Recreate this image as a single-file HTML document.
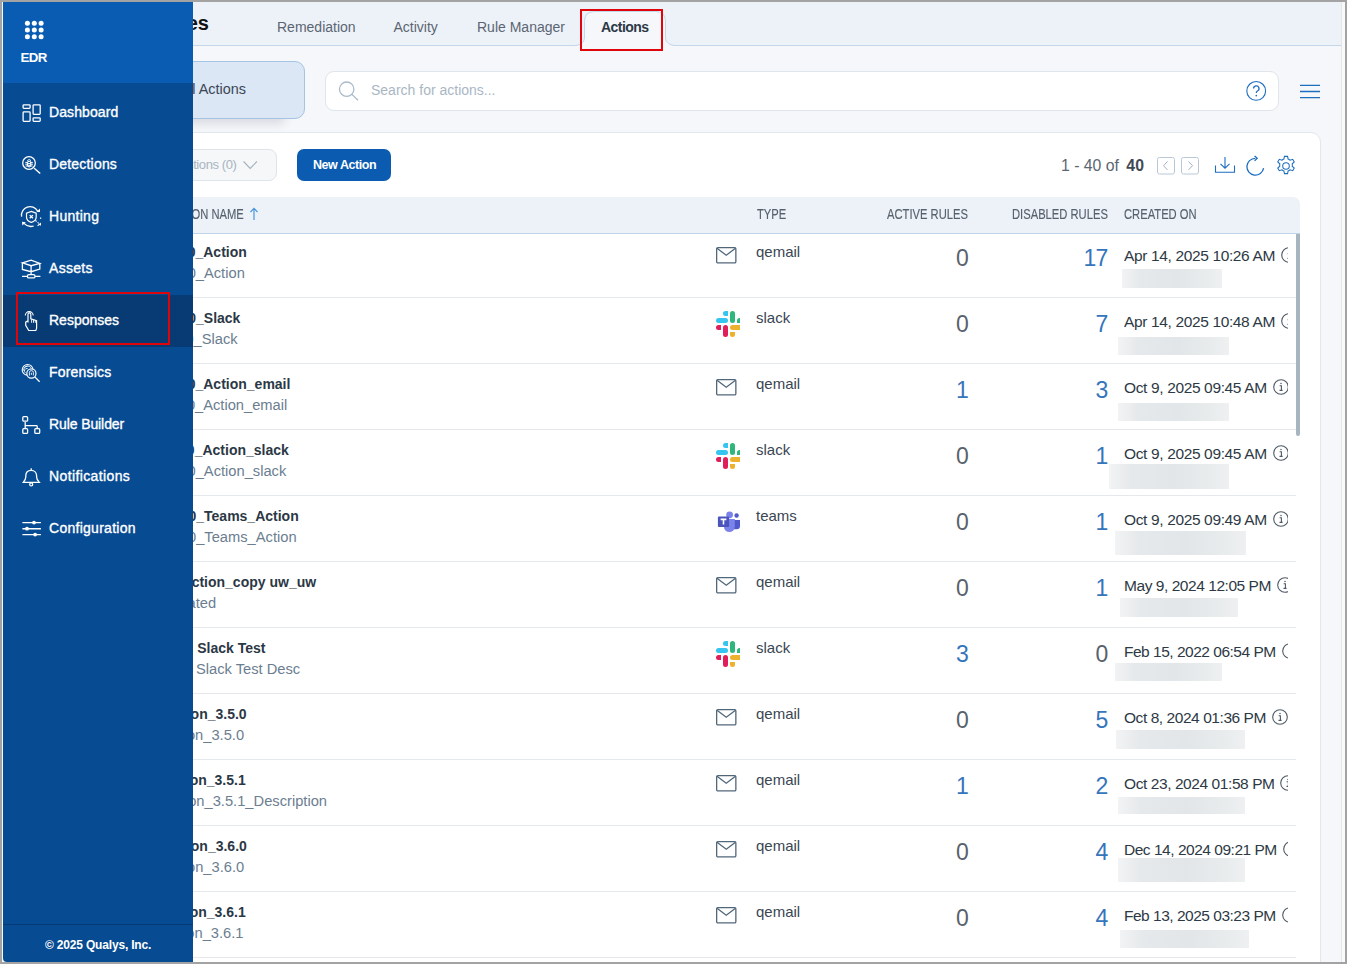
<!DOCTYPE html>
<html><head><meta charset="utf-8">
<style>
*{box-sizing:border-box}
html,body{margin:0;padding:0}
body{width:1347px;height:964px;overflow:hidden;background:#a3a3a3;position:relative;font-family:"Liberation Sans",sans-serif}
.abs{position:absolute}
#frame{position:absolute;left:2px;top:2px;width:1343px;height:960px;background:#f9f9f9;overflow:hidden}
#page{position:absolute;left:1px;top:0;width:1338px;height:960px;background:#f5f7fa;overflow:hidden}
#vline{position:absolute;left:1339px;top:0;width:1px;height:960px;background:#e6e6e6}
#content{position:absolute;left:-3px;top:-2px;width:1347px;height:964px}
.tab{position:absolute;top:20px;font-size:14px;color:#5b6572;line-height:14px;white-space:nowrap}
.nm{position:absolute;font-size:14px;font-weight:700;color:#2b3845;white-space:nowrap;line-height:18px}
.ds{position:absolute;font-size:14.7px;color:#6b7e90;white-space:nowrap;line-height:18px}
.ic{position:absolute;line-height:0}
.ty{position:absolute;left:756px;font-size:15px;color:#3a4653;line-height:18px}
.num{position:absolute;font-size:23px;color:#58626c;line-height:26px;letter-spacing:-0.8px}
.num.lk{color:#3575bb}
.dt{position:absolute;left:1124px;width:164px;overflow:hidden;white-space:nowrap;font-size:15.5px;color:#2d3944;line-height:18px;letter-spacing:-0.36px}
.dt svg{vertical-align:-2px;margin-left:2px}
.rb{position:absolute;left:150px;width:1146px;height:1px;background:#e5e9ed}
.blur{position:absolute;background:linear-gradient(90deg,#f2f3f4 0%,#e6e9eb 18%,#e3e6e8 55%,#e9eced 85%,#eef0f1 100%);filter:blur(0.3px)}
.th{position:absolute;top:207px;font-size:14px;color:#56616d;line-height:15px;white-space:nowrap;transform:scaleX(0.80);transform-origin:left top;-webkit-text-stroke:0.15px #56616d}
#sidebar{position:absolute;left:3px;top:2px;width:190px;height:960px;background:#074b92;overflow:hidden;border-bottom-left-radius:4px}
#sbtop{position:absolute;left:0;top:0;width:190px;height:81px;background:#0a5cb3}
.navic{position:absolute;left:15px}
.navt{position:absolute;left:46px;font-size:14px;font-weight:400;-webkit-text-stroke:0.35px #fff;color:#fff;letter-spacing:-0.05px;line-height:18px;white-space:nowrap}
</style></head><body>
<div id="frame"><div id="page"><div id="content">

<!-- header band -->
<div class="abs" style="left:193px;top:2px;width:1148px;height:44px;background:#edf2f9;border-bottom:1px solid #c3d6ea"></div>
<div class="abs" style="right:1138px;top:12px;font-size:20px;font-weight:700;color:#111;line-height:22px;white-space:nowrap">Responses</div>
<div class="tab" style="left:277px">Remediation</div>
<div class="tab" style="left:393.5px">Activity</div>
<div class="tab" style="left:477px">Rule Manager</div>
<svg class="abs" style="left:574px;top:10px" width="102" height="37" viewBox="0 0 102 37"><path d="M0 35.5 C6 35.5 10.5 33 10.5 27 V11.5 Q10.5 1.5 20.5 1.5 H81.5 Q91.5 1.5 91.5 11.5 V27 C91.5 33 96 35.5 102 35.5 V37 H0 Z" fill="#f5f7fa"/><path d="M0 35.5 C6 35.5 10.5 33 10.5 27 V11.5 Q10.5 1.5 20.5 1.5 H81.5 Q91.5 1.5 91.5 11.5 V27 C91.5 33 96 35.5 102 35.5" fill="none" stroke="#c3d6ea" stroke-width="1"/></svg>
<div class="abs" style="left:601px;top:20px;font-size:14px;font-weight:700;color:#2c3946;line-height:14px;letter-spacing:-0.55px">Actions</div>
<div class="abs" style="left:580px;top:9px;width:83px;height:42px;border:2px solid #e0040b"></div>

<!-- all actions pill -->
<div class="abs" style="left:150px;top:61px;width:155px;height:58px;background:#dbe7f4;border:1px solid #a5c3e3;border-radius:10px;box-shadow:-16px 8px 10px -3px rgba(30,40,60,.13)"></div>
<div class="abs" style="left:179.5px;top:81px;font-size:14.4px;color:#3a4654;line-height:16px">All Actions</div>

<!-- search -->
<div class="abs" style="left:325px;top:71px;width:954px;height:40px;background:#fff;border:1px solid #dfe5eb;border-radius:9px"></div>
<svg class="abs" style="left:338px;top:81px" width="22" height="22" viewBox="0 0 22 22" fill="none" stroke="#a9bac9" stroke-width="1.3"><circle cx="8.7" cy="8.2" r="7.2"/><path d="M13.9 13.4 L20 19.3"/></svg>
<div class="abs" style="left:371px;top:83px;font-size:14px;color:#a9b7c4;line-height:14px;white-space:nowrap">Search for actions...</div>
<svg class="abs" style="left:1245px;top:80px" width="22" height="22" viewBox="0 0 22 22"><circle cx="11.2" cy="10.9" r="9.4" fill="none" stroke="#1e6ec0" stroke-width="1.1"/><path d="M8.6 8.6 a2.7 2.7 0 1 1 3.8 2.4 c-.8 .35 -1.1 .9 -1.1 1.9" fill="none" stroke="#1e6ec0" stroke-width="1.3"/><circle cx="11.3" cy="15.6" r="0.85" fill="#1e6ec0"/></svg>
<svg class="abs" style="left:1299px;top:83px" width="22" height="16" viewBox="0 0 22 16" fill="none" stroke="#1e6ec0" stroke-width="1.3"><path d="M1 2.3 H21 M1 8.5 H21 M1 14.7 H21"/></svg>

<!-- card -->
<div class="abs" style="left:150px;top:132px;width:1171px;height:900px;background:#fff;border:1px solid #e2e7ed;border-radius:10px"></div>
<div class="abs" style="left:150px;top:149px;width:127px;height:32px;background:#f5f7f9;border:1px solid #dee4ea;border-radius:8px"></div>
<div class="abs" style="right:1110.5px;top:158px;font-size:13px;color:#a9b5c0;line-height:14px;letter-spacing:-0.4px;white-space:nowrap">Quick Actions (0)</div>
<svg class="abs" style="left:243px;top:161px" width="15" height="9" viewBox="0 0 15 9" fill="none" stroke="#a3b1bd" stroke-width="1.1"><path d="M0.6 0.5 L7.2 7.5 L13.9 0.5"/></svg>
<div class="abs" style="left:297px;top:149px;width:94px;height:32px;background:#0b5cb0;border-radius:7px"></div>
<div class="abs" style="left:313px;top:158px;font-size:12.5px;font-weight:700;color:#fff;line-height:14px;letter-spacing:-0.45px;white-space:nowrap">New Action</div>

<!-- pagination -->
<div class="abs" style="left:1061px;top:157px;font-size:15.8px;color:#5b6672;line-height:17px;white-space:nowrap">1 - 40 of <b style="color:#3f4a56;margin-left:3px">40</b></div>
<svg class="abs" style="left:1157px;top:157px" width="18" height="18" viewBox="0 0 18 18"><rect x="0.5" y="0.5" width="17" height="16.5" rx="2" fill="none" stroke="#b9c8d6"/><path d="M10.5 4.5 L6.5 8.7 L10.5 12.9" fill="none" stroke="#9fb2c4" stroke-width="1"/></svg>
<svg class="abs" style="left:1181px;top:157px" width="18" height="18" viewBox="0 0 18 18"><rect x="0.5" y="0.5" width="17" height="16.5" rx="2" fill="none" stroke="#b9c8d6"/><path d="M7.5 4.5 L11.5 8.7 L7.5 12.9" fill="none" stroke="#9fb2c4" stroke-width="1"/></svg>
<svg class="abs" style="left:1214px;top:156px" width="22" height="18" viewBox="0 0 22 18" fill="none" stroke="#1e6ec0" stroke-width="1.1"><path d="M11 1 V12 M6.5 7.8 L11 12.2 L15.5 7.8 M1.5 9.5 V16.3 H20.5 V9.5"/></svg>
<svg class="abs" style="left:1245px;top:155px" width="21" height="21" viewBox="0 0 21 21" fill="none" stroke="#1e6ec0" stroke-width="1.3"><path d="M10.3 3.3 A8.4 8.4 0 1 0 18.6 13.2"/><path d="M9.6 0.9 L12.2 3.3 L9.6 5.9"/></svg>
<svg class="abs" style="left:1275px;top:155px" width="22" height="22" viewBox="0 0 24 24" fill="none" stroke="#1e6ec0" stroke-width="1.15"><path d="M10.3 1.5 h3.4 l.6 2.9 a8 8 0 0 1 2.2 1.3 l2.8 -1 1.7 2.9 -2.2 2 a8 8 0 0 1 0 2.6 l2.2 2 -1.7 2.9 -2.8 -1 a8 8 0 0 1 -2.2 1.3 l-.6 2.9 h-3.4 l-.6 -2.9 a8 8 0 0 1 -2.2 -1.3 l-2.8 1 -1.7 -2.9 2.2 -2 a8 8 0 0 1 0 -2.6 l-2.2 -2 1.7 -2.9 2.8 1 a8 8 0 0 1 2.2 -1.3 Z"/><circle cx="12" cy="12" r="3.6"/></svg>

<!-- table header -->
<div class="abs" style="left:150px;top:197px;width:1150px;height:37px;background:#edf2f9;border-bottom:1px solid #bfd4ea;border-top-right-radius:7px"></div>
<div class="th" style="left:166px">ACTION NAME</div>
<svg class="abs" style="left:249px;top:207px" width="10" height="14" viewBox="0 0 10 14" fill="none" stroke="#4a97dc" stroke-width="1.2"><path d="M5 13 V1.5 M1.5 5 L5 1.3 L8.5 5"/></svg>
<div class="th" style="left:756.5px">TYPE</div>
<div class="th" style="left:886.5px">ACTIVE RULES</div>
<div class="th" style="left:1012px">DISABLED RULES</div>
<div class="th" style="left:1124px">CREATED ON</div>

<!-- rows -->

<div class="rb" style="top:297px"></div>
<div class="nm" style="right:1100.2px;top:243px">0_Action</div>
<div class="ds" style="right:1102.2px;top:264px">0_Action</div>
<div class="ic" style="left:716px;top:247px"><svg width="22" height="18" viewBox="0 0 22 18"><rect x="0.65" y="0.65" width="19.2" height="15.2" rx="1.2" fill="none" stroke="#51677a" stroke-width="1.3"/><path d="M1 1.2 L10.25 8.2 L19.5 1.2" fill="none" stroke="#51677a" stroke-width="1.3"/></svg></div>
<div class="ty" style="top:243px">qemail</div>
<div class="num" style="right:379px;top:245px">0</div>
<div class="num lk" style="right:239.5px;top:245px">17</div>
<div class="dt" style="top:247px;letter-spacing:-0.36px"><span>Apr 14, 2025 10:26 AM</span> <svg width="16" height="16" viewBox="0 0 16 16"><circle cx="8" cy="8" r="7.3" fill="none" stroke="#4d5966" stroke-width="1.1"/><circle cx="8" cy="4.6" r="0.75" fill="#4d5966"/><path d="M6.6 6.7 H8.4 V11.3 M6.5 11.4 H9.6" fill="none" stroke="#4d5966" stroke-width="1.1"/></svg></div>
<div class="blur" style="left:1122px;top:269px;width:100.0px;height:18.5px"></div>

<div class="rb" style="top:363px"></div>
<div class="nm" style="right:1106.6px;top:309px">0_Slack</div>
<div class="ds" style="right:1109.3px;top:330px">0_Slack</div>
<div class="ic" style="left:716px;top:311px"><svg width="24" height="26" viewBox="0 0 24 26">
<rect x="7" y="0" width="5" height="5" rx="2.5" fill="#36c5f0"/><rect x="9.5" y="0" width="2.5" height="5" fill="#36c5f0"/>
<rect x="0" y="7" width="12" height="5" rx="2.5" fill="#36c5f0"/>
<rect x="14" y="0" width="5" height="12" rx="2.5" fill="#2eb67d"/>
<rect x="21" y="7" width="5" height="5" rx="2.5" fill="#2eb67d"/><rect x="21" y="9.5" width="5" height="2.5" fill="#2eb67d"/>
<rect x="0" y="14" width="5" height="5" rx="2.5" fill="#e01e5a"/><rect x="2.5" y="14" width="2.5" height="5" fill="#e01e5a"/>
<rect x="7" y="14" width="5" height="12" rx="2.5" fill="#e01e5a"/>
<rect x="14" y="14" width="12" height="5" rx="2.5" fill="#ecb22e"/>
<rect x="14" y="21" width="5" height="5" rx="2.5" fill="#ecb22e"/><rect x="14" y="21" width="5" height="2.5" fill="#ecb22e"/>
</svg></div>
<div class="ty" style="top:309px">slack</div>
<div class="num" style="right:379px;top:311px">0</div>
<div class="num lk" style="right:239.5px;top:311px">7</div>
<div class="dt" style="top:313px;letter-spacing:-0.36px"><span>Apr 14, 2025 10:48 AM</span> <svg width="16" height="16" viewBox="0 0 16 16"><circle cx="8" cy="8" r="7.3" fill="none" stroke="#4d5966" stroke-width="1.1"/><circle cx="8" cy="4.6" r="0.75" fill="#4d5966"/><path d="M6.6 6.7 H8.4 V11.3 M6.5 11.4 H9.6" fill="none" stroke="#4d5966" stroke-width="1.1"/></svg></div>
<div class="blur" style="left:1118px;top:337px;width:111.0px;height:17.7px"></div>

<div class="rb" style="top:429px"></div>
<div class="nm" style="right:1056.6px;top:375px">0_Action_email</div>
<div class="ds" style="right:1059.7px;top:396px">0_Action_email</div>
<div class="ic" style="left:716px;top:379px"><svg width="22" height="18" viewBox="0 0 22 18"><rect x="0.65" y="0.65" width="19.2" height="15.2" rx="1.2" fill="none" stroke="#51677a" stroke-width="1.3"/><path d="M1 1.2 L10.25 8.2 L19.5 1.2" fill="none" stroke="#51677a" stroke-width="1.3"/></svg></div>
<div class="ty" style="top:375px">qemail</div>
<div class="num lk" style="right:379px;top:377px">1</div>
<div class="num lk" style="right:239.5px;top:377px">3</div>
<div class="dt" style="top:379px;letter-spacing:-0.36px"><span>Oct 9, 2025 09:45 AM</span> <svg width="16" height="16" viewBox="0 0 16 16"><circle cx="8" cy="8" r="7.3" fill="none" stroke="#4d5966" stroke-width="1.1"/><circle cx="8" cy="4.6" r="0.75" fill="#4d5966"/><path d="M6.6 6.7 H8.4 V11.3 M6.5 11.4 H9.6" fill="none" stroke="#4d5966" stroke-width="1.1"/></svg></div>
<div class="blur" style="left:1118px;top:402.5px;width:111.0px;height:18.3px"></div>

<div class="rb" style="top:495px"></div>
<div class="nm" style="right:1058.2px;top:441px">0_Action_slack</div>
<div class="ds" style="right:1060.7px;top:462px">0_Action_slack</div>
<div class="ic" style="left:716px;top:443px"><svg width="24" height="26" viewBox="0 0 24 26">
<rect x="7" y="0" width="5" height="5" rx="2.5" fill="#36c5f0"/><rect x="9.5" y="0" width="2.5" height="5" fill="#36c5f0"/>
<rect x="0" y="7" width="12" height="5" rx="2.5" fill="#36c5f0"/>
<rect x="14" y="0" width="5" height="12" rx="2.5" fill="#2eb67d"/>
<rect x="21" y="7" width="5" height="5" rx="2.5" fill="#2eb67d"/><rect x="21" y="9.5" width="5" height="2.5" fill="#2eb67d"/>
<rect x="0" y="14" width="5" height="5" rx="2.5" fill="#e01e5a"/><rect x="2.5" y="14" width="2.5" height="5" fill="#e01e5a"/>
<rect x="7" y="14" width="5" height="12" rx="2.5" fill="#e01e5a"/>
<rect x="14" y="14" width="12" height="5" rx="2.5" fill="#ecb22e"/>
<rect x="14" y="21" width="5" height="5" rx="2.5" fill="#ecb22e"/><rect x="14" y="21" width="5" height="2.5" fill="#ecb22e"/>
</svg></div>
<div class="ty" style="top:441px">slack</div>
<div class="num" style="right:379px;top:443px">0</div>
<div class="num lk" style="right:239.5px;top:443px">1</div>
<div class="dt" style="top:445px;letter-spacing:-0.36px"><span>Oct 9, 2025 09:45 AM</span> <svg width="16" height="16" viewBox="0 0 16 16"><circle cx="8" cy="8" r="7.3" fill="none" stroke="#4d5966" stroke-width="1.1"/><circle cx="8" cy="4.6" r="0.75" fill="#4d5966"/><path d="M6.6 6.7 H8.4 V11.3 M6.5 11.4 H9.6" fill="none" stroke="#4d5966" stroke-width="1.1"/></svg></div>
<div class="blur" style="left:1109px;top:464px;width:120.0px;height:25.0px"></div>

<div class="rb" style="top:561px"></div>
<div class="nm" style="right:1048.3px;top:507px">0_Teams_Action</div>
<div class="ds" style="right:1050.4px;top:528px">0_Teams_Action</div>
<div class="ic" style="left:717px;top:510px"><svg width="23" height="23" viewBox="0 0 23 23">
<circle cx="19.6" cy="5.5" r="2.2" fill="#5059c9"/>
<path d="M16.5 10 H23 V16 a3.3 3.3 0 0 1 -3.3 3.3 H16.5 Z" fill="#5059c9"/>
<circle cx="12.6" cy="4.8" r="3.4" fill="#7b83eb"/>
<path d="M6.9 9 H17.8 V16.6 a5.45 5.45 0 0 1 -10.9 0 Z" fill="#7b83eb"/>
<rect x="0.9" y="6.5" width="11.2" height="10.4" rx="1" fill="#4b53bc"/>
<path d="M3.6 9.4 H9.4 M6.5 9.4 V14.6" stroke="#fff" stroke-width="1.6" fill="none"/>
</svg></div>
<div class="ty" style="top:507px">teams</div>
<div class="num" style="right:379px;top:509px">0</div>
<div class="num lk" style="right:239.5px;top:509px">1</div>
<div class="dt" style="top:511px;letter-spacing:-0.36px"><span>Oct 9, 2025 09:49 AM</span> <svg width="16" height="16" viewBox="0 0 16 16"><circle cx="8" cy="8" r="7.3" fill="none" stroke="#4d5966" stroke-width="1.1"/><circle cx="8" cy="4.6" r="0.75" fill="#4d5966"/><path d="M6.6 6.7 H8.4 V11.3 M6.5 11.4 H9.6" fill="none" stroke="#4d5966" stroke-width="1.1"/></svg></div>
<div class="blur" style="left:1115px;top:531px;width:130.5px;height:24.0px"></div>

<div class="rb" style="top:627px"></div>
<div class="nm" style="right:1030.9px;top:573px">Action_copy uw_uw</div>
<div class="ds" style="right:1130.9px;top:594px">Updated</div>
<div class="ic" style="left:716px;top:577px"><svg width="22" height="18" viewBox="0 0 22 18"><rect x="0.65" y="0.65" width="19.2" height="15.2" rx="1.2" fill="none" stroke="#51677a" stroke-width="1.3"/><path d="M1 1.2 L10.25 8.2 L19.5 1.2" fill="none" stroke="#51677a" stroke-width="1.3"/></svg></div>
<div class="ty" style="top:573px">qemail</div>
<div class="num" style="right:379px;top:575px">0</div>
<div class="num lk" style="right:239.5px;top:575px">1</div>
<div class="dt" style="top:577px;letter-spacing:-0.45px"><span>May 9, 2024 12:05 PM</span> <svg width="16" height="16" viewBox="0 0 16 16"><circle cx="8" cy="8" r="7.3" fill="none" stroke="#4d5966" stroke-width="1.1"/><circle cx="8" cy="4.6" r="0.75" fill="#4d5966"/><path d="M6.6 6.7 H8.4 V11.3 M6.5 11.4 H9.6" fill="none" stroke="#4d5966" stroke-width="1.1"/></svg></div>
<div class="blur" style="left:1120px;top:598px;width:118.0px;height:19.0px"></div>

<div class="rb" style="top:693px"></div>
<div class="nm" style="right:1081.5px;top:639px">Slack Test</div>
<div class="ds" style="right:1046.8px;top:660px">Slack Test Desc</div>
<div class="ic" style="left:716px;top:641px"><svg width="24" height="26" viewBox="0 0 24 26">
<rect x="7" y="0" width="5" height="5" rx="2.5" fill="#36c5f0"/><rect x="9.5" y="0" width="2.5" height="5" fill="#36c5f0"/>
<rect x="0" y="7" width="12" height="5" rx="2.5" fill="#36c5f0"/>
<rect x="14" y="0" width="5" height="12" rx="2.5" fill="#2eb67d"/>
<rect x="21" y="7" width="5" height="5" rx="2.5" fill="#2eb67d"/><rect x="21" y="9.5" width="5" height="2.5" fill="#2eb67d"/>
<rect x="0" y="14" width="5" height="5" rx="2.5" fill="#e01e5a"/><rect x="2.5" y="14" width="2.5" height="5" fill="#e01e5a"/>
<rect x="7" y="14" width="5" height="12" rx="2.5" fill="#e01e5a"/>
<rect x="14" y="14" width="12" height="5" rx="2.5" fill="#ecb22e"/>
<rect x="14" y="21" width="5" height="5" rx="2.5" fill="#ecb22e"/><rect x="14" y="21" width="5" height="2.5" fill="#ecb22e"/>
</svg></div>
<div class="ty" style="top:639px">slack</div>
<div class="num lk" style="right:379px;top:641px">3</div>
<div class="num" style="right:239.5px;top:641px">0</div>
<div class="dt" style="top:643px;letter-spacing:-0.49px"><span>Feb 15, 2022 06:54 PM</span> <svg width="16" height="16" viewBox="0 0 16 16"><circle cx="8" cy="8" r="7.3" fill="none" stroke="#4d5966" stroke-width="1.1"/><circle cx="8" cy="4.6" r="0.75" fill="#4d5966"/><path d="M6.6 6.7 H8.4 V11.3 M6.5 11.4 H9.6" fill="none" stroke="#4d5966" stroke-width="1.1"/></svg></div>
<div class="blur" style="left:1114.8px;top:662.8px;width:107.2px;height:18.6px"></div>

<div class="rb" style="top:759px"></div>
<div class="nm" style="right:1100.4px;top:705px">Action_3.5.0</div>
<div class="ds" style="right:1102.9px;top:726px">Action_3.5.0</div>
<div class="ic" style="left:716px;top:709px"><svg width="22" height="18" viewBox="0 0 22 18"><rect x="0.65" y="0.65" width="19.2" height="15.2" rx="1.2" fill="none" stroke="#51677a" stroke-width="1.3"/><path d="M1 1.2 L10.25 8.2 L19.5 1.2" fill="none" stroke="#51677a" stroke-width="1.3"/></svg></div>
<div class="ty" style="top:705px">qemail</div>
<div class="num" style="right:379px;top:707px">0</div>
<div class="num lk" style="right:239.5px;top:707px">5</div>
<div class="dt" style="top:709px;letter-spacing:-0.44px"><span>Oct 8, 2024 01:36 PM</span> <svg width="16" height="16" viewBox="0 0 16 16"><circle cx="8" cy="8" r="7.3" fill="none" stroke="#4d5966" stroke-width="1.1"/><circle cx="8" cy="4.6" r="0.75" fill="#4d5966"/><path d="M6.6 6.7 H8.4 V11.3 M6.5 11.4 H9.6" fill="none" stroke="#4d5966" stroke-width="1.1"/></svg></div>
<div class="blur" style="left:1116px;top:730px;width:128.7px;height:18.5px"></div>

<div class="rb" style="top:825px"></div>
<div class="nm" style="right:1101.3px;top:771px">Action_3.5.1</div>
<div class="ds" style="right:1020.0px;top:792px">Action_3.5.1_Description</div>
<div class="ic" style="left:716px;top:775px"><svg width="22" height="18" viewBox="0 0 22 18"><rect x="0.65" y="0.65" width="19.2" height="15.2" rx="1.2" fill="none" stroke="#51677a" stroke-width="1.3"/><path d="M1 1.2 L10.25 8.2 L19.5 1.2" fill="none" stroke="#51677a" stroke-width="1.3"/></svg></div>
<div class="ty" style="top:771px">qemail</div>
<div class="num lk" style="right:379px;top:773px">1</div>
<div class="num lk" style="right:239.5px;top:773px">2</div>
<div class="dt" style="top:775px;letter-spacing:-0.42px"><span>Oct 23, 2024 01:58 PM</span> <svg width="16" height="16" viewBox="0 0 16 16"><circle cx="8" cy="8" r="7.3" fill="none" stroke="#4d5966" stroke-width="1.1"/><circle cx="8" cy="4.6" r="0.75" fill="#4d5966"/><path d="M6.6 6.7 H8.4 V11.3 M6.5 11.4 H9.6" fill="none" stroke="#4d5966" stroke-width="1.1"/></svg></div>
<div class="blur" style="left:1117.7px;top:796.7px;width:127.0px;height:17.8px"></div>

<div class="rb" style="top:891px"></div>
<div class="nm" style="right:1100.2px;top:837px">Action_3.6.0</div>
<div class="ds" style="right:1102.8px;top:858px">Action_3.6.0</div>
<div class="ic" style="left:716px;top:841px"><svg width="22" height="18" viewBox="0 0 22 18"><rect x="0.65" y="0.65" width="19.2" height="15.2" rx="1.2" fill="none" stroke="#51677a" stroke-width="1.3"/><path d="M1 1.2 L10.25 8.2 L19.5 1.2" fill="none" stroke="#51677a" stroke-width="1.3"/></svg></div>
<div class="ty" style="top:837px">qemail</div>
<div class="num" style="right:379px;top:839px">0</div>
<div class="num lk" style="right:239.5px;top:839px">4</div>
<div class="dt" style="top:841px;letter-spacing:-0.48px"><span>Dec 14, 2024 09:21 PM</span> <svg width="16" height="16" viewBox="0 0 16 16"><circle cx="8" cy="8" r="7.3" fill="none" stroke="#4d5966" stroke-width="1.1"/><circle cx="8" cy="4.6" r="0.75" fill="#4d5966"/><path d="M6.6 6.7 H8.4 V11.3 M6.5 11.4 H9.6" fill="none" stroke="#4d5966" stroke-width="1.1"/></svg></div>
<div class="blur" style="left:1117.7px;top:858px;width:127.0px;height:24.0px"></div>

<div class="rb" style="top:957px"></div>
<div class="nm" style="right:1101.3px;top:903px">Action_3.6.1</div>
<div class="ds" style="right:1103.5px;top:924px">Action_3.6.1</div>
<div class="ic" style="left:716px;top:907px"><svg width="22" height="18" viewBox="0 0 22 18"><rect x="0.65" y="0.65" width="19.2" height="15.2" rx="1.2" fill="none" stroke="#51677a" stroke-width="1.3"/><path d="M1 1.2 L10.25 8.2 L19.5 1.2" fill="none" stroke="#51677a" stroke-width="1.3"/></svg></div>
<div class="ty" style="top:903px">qemail</div>
<div class="num" style="right:379px;top:905px">0</div>
<div class="num lk" style="right:239.5px;top:905px">4</div>
<div class="dt" style="top:907px;letter-spacing:-0.49px"><span>Feb 13, 2025 03:23 PM</span> <svg width="16" height="16" viewBox="0 0 16 16"><circle cx="8" cy="8" r="7.3" fill="none" stroke="#4d5966" stroke-width="1.1"/><circle cx="8" cy="4.6" r="0.75" fill="#4d5966"/><path d="M6.6 6.7 H8.4 V11.3 M6.5 11.4 H9.6" fill="none" stroke="#4d5966" stroke-width="1.1"/></svg></div>
<div class="blur" style="left:1119.8px;top:929.8px;width:129.2px;height:18.5px"></div>


<!-- scrollbar -->
<div class="abs" style="left:1296px;top:234px;width:4px;height:202px;background:#a8b4bf;border-radius:0 0 2px 2px"></div>

<!-- sidebar -->
<div id="sidebar">
 <div id="sbtop"></div>
 <svg class="abs" style="left:21px;top:18px" width="22" height="22" viewBox="0 0 22 22" fill="#fff">
  <circle cx="3.4" cy="3.2" r="2.5"/><circle cx="10.3" cy="3.2" r="2.5"/><circle cx="17.1" cy="3.2" r="2.5"/>
  <circle cx="3.4" cy="10" r="2.5"/><circle cx="10.3" cy="10" r="2.5"/><circle cx="17.1" cy="10" r="2.5"/>
  <circle cx="3.4" cy="16.8" r="2.5"/><circle cx="10.3" cy="16.8" r="2.5"/><circle cx="17.1" cy="16.8" r="2.5"/>
 </svg>
 <div class="abs" style="left:17.5px;top:48px;font-size:13.3px;font-weight:700;color:#fff;line-height:16px;letter-spacing:-0.6px">EDR</div>
 <svg class="navic" style="top:98px" width="28" height="28" viewBox="0 0 28 28" fill="none" stroke="#fff" stroke-width="1.3"><rect x="5.1" y="4.8" width="7" height="3.5" rx="0.8"/><rect x="5.1" y="11.9" width="7" height="9.5" rx="0.8"/><rect x="15.1" y="4.8" width="7.1" height="9.5" rx="0.8"/><rect x="15.1" y="17.8" width="7.1" height="3.6" rx="0.8"/></svg><div class="navt" style="top:101px;letter-spacing:0.1px">Dashboard</div><svg class="navic" style="top:148px" width="28" height="28" viewBox="0 0 28 28" fill="none" stroke="#fff" stroke-width="1.3"><circle cx="11" cy="13" r="6.3"/><path d="M16.2 18.3 L22.2 23.6" stroke-width="1.4"/><rect x="9.5" y="11.3" width="3.2" height="5.6" rx="1.6" stroke-width="1.1"/><path d="M7.4 12.4 H9.4 M7.3 14.2 H9.4 M7.6 16 H9.4 M12.8 12.4 H14.8 M12.8 14.2 H14.9 M12.8 16 H14.6 M10 13.6 H12.2 M10 15.3 H12.2 M9.3 10.6 Q11.1 8.4 13 10.6" stroke-width="1"/></svg><div class="navt" style="top:153px;letter-spacing:0.19px">Detections</div><svg class="navic" style="top:200px" width="28" height="28" viewBox="0 0 28 28" fill="none" stroke="#fff" stroke-width="1.3"><path d="M3.6 14.6 A8.6 8.6 0 0 1 19.6 9"/><path d="M18.3 9.9 L22 9.9 L22 6.4 Z" fill="#fff" stroke="none"/><path d="M6 21.4 A9.5 9.5 0 0 0 15.7 24"/><path d="M4 19.8 L7.8 20.2 L4.4 23.4 Z" fill="#fff" stroke="none"/><path d="M13.3 9.4 L18.2 11.1 V15 C18.2 17.8 16 19.5 13.3 20.3 C10.6 19.5 8.5 17.8 8.5 15 V11.1 Z" stroke-width="1.2"/><path d="M11.7 13.1 L14.9 16.3 M14.9 13.1 L11.7 16.3" stroke-width="1.3"/><path d="M22.7 15.4 V17" stroke-width="1"/><path d="M17.4 18.4 L18.6 19.5 M19.6 20.4 L20.8 21.4 M19.6 23.8 L22.4 21.6 V23.4" stroke-width="1.1"/></svg><div class="navt" style="top:205px;letter-spacing:0.28px">Hunting</div><svg class="navic" style="top:252px" width="28" height="28" viewBox="0 0 28 28" fill="none" stroke="#fff" stroke-width="1.3"><path d="M4.4 8.8 L13.1 6.1 L21.8 9.3 L13.1 11.7 Z"/><path d="M4.4 8.8 V15.4 L13.1 17.7 L21.8 15.1 V9.3 M13.1 11.7 V20.6 M4.1 22.4 H9.5 M17 22.4 H22.4"/><rect x="9.5" y="20.7" width="7.4" height="3.2" rx="1.2"/></svg><div class="navt" style="top:257px;letter-spacing:0.31px">Assets</div><div style="position:absolute;left:0;top:293px;width:190px;height:52px;background:#083b74"></div><svg class="navic" style="top:304px" width="28" height="28" viewBox="0 0 28 28" fill="none" stroke="#fff" stroke-width="1.3"><path d="M7.3 9.6 A3.95 3.95 0 0 1 15.2 9.6" stroke-width="1.1"/><path d="M10 16.5 V8.3 A1.4 1.4 0 0 1 12.8 8.3 V12.8 L18.6 14.7 V22.4 L17.8 24.5 H10.7 L7.7 19.4 V16.2 Q8.3 15.1 10 15.6" stroke-width="1.2"/><path d="M13.6 13.3 V16.8 M15.5 13.9 V16.8 M17.3 14.5 V16.8" stroke-width="0.9"/></svg><div class="navt" style="top:309px;letter-spacing:0.0px">Responses</div><svg class="navic" style="top:356px" width="28" height="28" viewBox="0 0 28 28" fill="none" stroke="#fff" stroke-width="1.3"><circle cx="9.6" cy="11.9" r="5.4" stroke-width="1.1"/><path d="M6.4 9.6 A4 4 0 0 1 12.8 9.6 M5.6 12.6 A4 4 0 0 1 9.6 8.2 M7.4 14.8 A2.4 2.4 0 0 1 9.6 10.6" stroke-width="0.9"/><circle cx="13.4" cy="15.5" r="4.6" fill="#074b92" stroke-width="1.2"/><path d="M11.4 17.6 V14.6 A2 2 0 0 1 15.4 14.6 V17.4 M13.4 16.8 V14.8" stroke-width="0.9"/><path d="M16.8 18.9 L21.6 23.7" stroke-width="1.3"/></svg><div class="navt" style="top:361px;letter-spacing:0.2px">Forensics</div><svg class="navic" style="top:408px" width="28" height="28" viewBox="0 0 28 28" fill="none" stroke="#fff" stroke-width="1.3"><rect x="4.8" y="6.7" width="4.8" height="4.5" rx="1"/><rect x="4.8" y="18.7" width="4.8" height="4.7" rx="1"/><rect x="16.8" y="18.7" width="4.9" height="4.7" rx="1"/><path d="M7.2 11.9 V18 M7.2 15.6 H18.4 Q19.2 15.6 19.2 16.4 V18"/></svg><div class="navt" style="top:413px;letter-spacing:-0.1px">Rule Builder</div><svg class="navic" style="top:460px" width="28" height="28" viewBox="0 0 28 28" fill="none" stroke="#fff" stroke-width="1.3"><path d="M13.2 6.2 V8.2"/><path d="M5.3 20.4 H21.3 C19.6 18.6 18.6 17.2 18.6 15 V13.8 C18.6 10.5 16.4 8.4 13.2 8.4 C10 8.4 7.8 10.5 7.8 13.8 V15 C7.8 17.2 6.8 18.6 5.3 20.4 Z"/><circle cx="13.2" cy="22.4" r="1.5"/></svg><div class="navt" style="top:465px;letter-spacing:0.38px">Notifications</div><svg class="navic" style="top:512px" width="28" height="28" viewBox="0 0 28 28" fill="none" stroke="#fff" stroke-width="1.3"><path d="M4.4 8.6 H22.9 M4.4 14.7 H22.9 M4.4 20.6 H22.9" stroke-width="1.4"/><circle cx="16" cy="8.6" r="1.9" fill="#fff" stroke="none"/><circle cx="9" cy="14.7" r="1.9" fill="#fff" stroke="none"/><circle cx="17.1" cy="20.6" r="1.9" fill="#fff" stroke="none"/></svg><div class="navt" style="top:517px;letter-spacing:0.27px">Configuration</div>
 <div class="abs" style="left:0;top:922px;width:190px;height:1px;background:#053a74"></div>
 <div class="abs" style="left:42px;top:936px;font-size:12px;font-weight:700;color:#fff;line-height:14px;letter-spacing:-0.18px;white-space:nowrap">© 2025 Qualys, Inc.</div>
</div>
<div class="abs" style="left:16px;top:292px;width:154px;height:53px;border:2px solid #e0040b"></div>

</div></div><div id="vline"></div></div>
</body></html>
